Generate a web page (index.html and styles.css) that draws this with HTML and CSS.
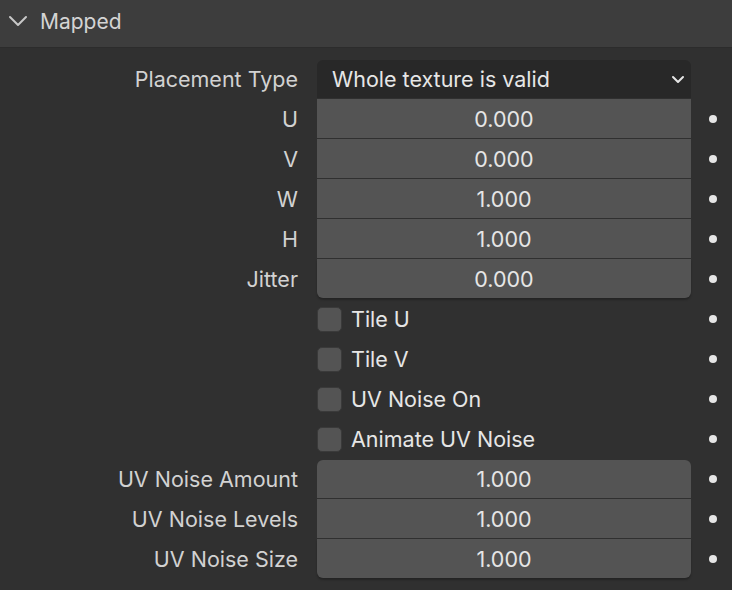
FILE: index.html
```html
<!DOCTYPE html>
<html>
<head>
<meta charset="utf-8">
<link rel="stylesheet" href="styles.css">
</head>
<body>
<div class="panel">
  <div class="header">
    <svg class="chev" width="20" height="12" viewBox="0 0 20 12"><path d="M2 2 L10 10 L18 2" fill="none" stroke="#c8c8c8" stroke-width="2" stroke-linecap="round" stroke-linejoin="round"/></svg>
    <span class="title">Mapped</span>
  </div>
  <div class="props">
    <div class="label">Placement Type</div>
    <div class="cell"><div class="dropdown"><span>Whole texture is valid</span><svg width="14" height="9" viewBox="0 0 14 9"><path d="M2 2 L7 7 L12 2" fill="none" stroke="#e6e6e6" stroke-width="2" stroke-linecap="round" stroke-linejoin="round"/></svg></div></div>
    <div class="dotcell"></div>

    <div class="label">U</div>
    <div class="cell"><div class="num">0.000</div></div>
    <div class="dotcell"><span class="dot"></span></div>

    <div class="label">V</div>
    <div class="cell"><div class="num">0.000</div></div>
    <div class="dotcell"><span class="dot"></span></div>

    <div class="label">W</div>
    <div class="cell"><div class="num">1.000</div></div>
    <div class="dotcell"><span class="dot"></span></div>

    <div class="label">H</div>
    <div class="cell"><div class="num">1.000</div></div>
    <div class="dotcell"><span class="dot"></span></div>

    <div class="label">Jitter</div>
    <div class="cell"><div class="num last">0.000</div></div>
    <div class="dotcell"><span class="dot"></span></div>

    <div class="label"></div>
    <div class="cell"><div class="check"><span class="box"></span><span>Tile U</span></div></div>
    <div class="dotcell"><span class="dot"></span></div>

    <div class="label"></div>
    <div class="cell"><div class="check"><span class="box"></span><span>Tile V</span></div></div>
    <div class="dotcell"><span class="dot"></span></div>

    <div class="label"></div>
    <div class="cell"><div class="check"><span class="box"></span><span>UV Noise On</span></div></div>
    <div class="dotcell"><span class="dot"></span></div>

    <div class="label"></div>
    <div class="cell"><div class="check"><span class="box"></span><span>Animate UV Noise</span></div></div>
    <div class="dotcell"><span class="dot"></span></div>

    <div class="label">UV Noise Amount</div>
    <div class="cell"><div class="num first">1.000</div></div>
    <div class="dotcell"><span class="dot"></span></div>

    <div class="label">UV Noise Levels</div>
    <div class="cell"><div class="num">1.000</div></div>
    <div class="dotcell"><span class="dot"></span></div>

    <div class="label">UV Noise Size</div>
    <div class="cell"><div class="num last">1.000</div></div>
    <div class="dotcell"><span class="dot"></span></div>
  </div>
</div>
</body>
</html>
```
FILE: styles.css
```css
html, body {
  margin: 0;
  padding: 0;
  background: #303030;
  font-family: Inter, "Noto Sans", sans-serif;
  color: #e6e6e6;
}
.panel {
  width: 732px;
  height: 590px;
  overflow: hidden;
}
.header {
  height: 48px;
  background: #3d3d3d;
  border-bottom: 1px solid #2c2c2c;
  display: flex;
  align-items: center;
  padding-left: 8px;
  padding-bottom: 5px;
  box-sizing: border-box;
}
.chev {
  margin-right: 12px;
}
.title {
  font-size: 21px;
  color: #d4d4d4;
}
.props {
  display: grid;
  grid-template-columns: 317px 374px 44px;
  grid-auto-rows: 40px;
  padding-top: 11px;
}
.label {
  text-align: right;
  padding-right: 19px;
  font-size: 21.5px;
  line-height: 41px;
  color: #d2d2d2;
  white-space: nowrap;
}
.cell {
  display: flex;
  flex-direction: column;
}
.dropdown {
  margin-top: 1px;
  height: 38px;
  background: #282828;
  border-radius: 6px 6px 0 0;
  display: flex;
  align-items: center;
  justify-content: space-between;
  padding: 0 6px 0 15px;
  font-size: 21.5px;
  color: #e6e6e6;
}
.num {
  height: 39px;
  background: #545454;
  text-align: center;
  font-size: 21.5px;
  line-height: 40px;
  color: #e6e6e6;
}
.num.first {
  border-radius: 6px 6px 0 0;
  margin-top: 1px;
  height: 38px;
  line-height: 39px;
}
.num.last {
  border-radius: 0 0 6px 6px;
  box-shadow: 0 2px 2px rgba(0,0,0,0.25);
}
.dotcell {
  display: flex;
  align-items: center;
  justify-content: center;
}
.dot {
  width: 8px;
  height: 8px;
  border-radius: 50%;
  background: #e6e6e6;
}
.check {
  display: flex;
  align-items: center;
  height: 40px;
  font-size: 21.5px;
  color: #e6e6e6;
}
.box {
  width: 23px;
  height: 23px;
  background: #545454;
  border: 1px solid #3a3a3a;
  border-radius: 5px;
  margin-right: 9px;
}
```
